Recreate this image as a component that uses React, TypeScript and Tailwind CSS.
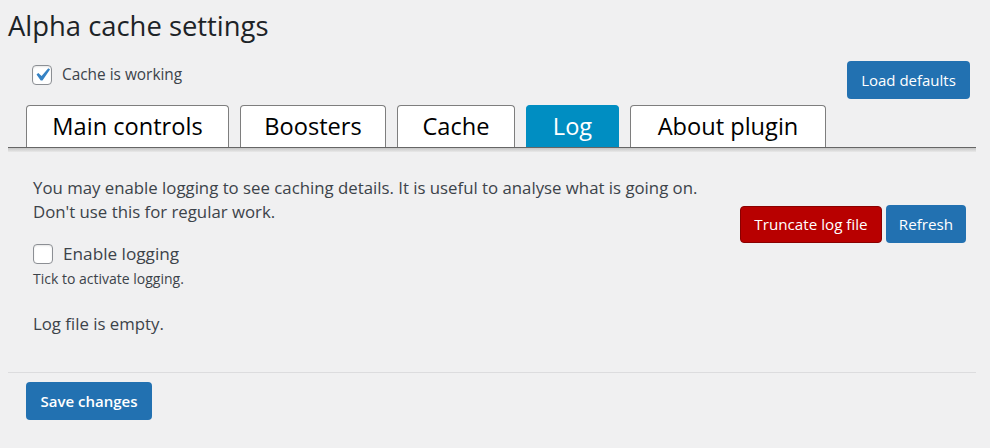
import React from 'react'

const TABS = [
  { label: 'Main controls', w: 'w-[203px]', active: false },
  { label: 'Boosters', w: 'w-[146px]', active: false },
  { label: 'Cache', w: 'w-[118px]', active: false },
  { label: 'Log', w: 'w-[93px]', active: true },
  { label: 'About plugin', w: 'w-[196px]', active: false },
]

function Checkbox({ checked }: { checked?: boolean }) {
  return (
    <span className="relative inline-block w-[20px] h-[20px] shrink-0 rounded-[4px] border border-[#8c8f94] bg-white shadow-[inset_0_1px_2px_rgba(0,0,0,0.1)]">
      {checked && (
        <svg viewBox="0 0 20 20" className="absolute left-[-4px] top-[-4px] w-[26px] h-[26px]">
          <path d="M14.83 4.89l1.34.94-5.81 8.38H9.02L5.78 9.67l1.34-1.25 2.57 2.4z" fill="#3582c4" />
        </svg>
      )}
    </span>
  )
}

export default function App() {
  return (
    <div className="min-h-screen bg-[#f0f0f1] font-['Open_Sans',sans-serif] text-[#3c434a]">
      <div className="ml-2 mr-[14px] pt-[8px]">
        <h1 className="text-[27.4px] leading-[36px] text-[#1d2327]">Alpha cache settings</h1>

        {/* status + defaults */}
        <div className="flex items-start justify-between mt-[17px]">
          <label className="flex items-center gap-[10px] ml-[24px] mt-[4px] text-[15.4px] leading-[20px]">
            <Checkbox checked />
            Cache is working
          </label>
          <button className="h-[38px] w-[123px] mr-[6px] rounded-[4px] bg-[#2271b1] text-white text-[15px]">
            Load defaults
          </button>
        </div>

        {/* tabs */}
        <div className="mt-[6px]">
          <div className="flex gap-[11px] pl-[18px] border-b border-[#666]">
            {TABS.map(t => (
              <div
                key={t.label}
                className={
                  'h-[42px] flex items-center justify-center rounded-t-[4px] border border-b-0 text-[23.6px] ' +
                  t.w +
                  (t.active ? ' bg-[#008ec2] border-[#008ec2] text-white' : ' bg-white border-[#7e7e7e] text-black')
                }
              >
                {t.label}
              </div>
            ))}
          </div>
          <div className="h-[4px] bg-gradient-to-b from-[#c6c6c6] to-[#e9e9e9]" />
        </div>

        {/* log panel */}
        <div className="flex justify-between pl-[25px] pr-[10px] pt-[24px]">
          <div>
            <p className="text-[16.8px] leading-[24px]">
              You may enable logging to see caching details. It is useful to analyse what is going on.
              <br />
              Don't use this for regular work.
            </p>
            <label className="flex items-center gap-[10px] mt-[18px] text-[17.2px] leading-[24px]">
              <Checkbox />
              Enable logging
            </label>
            <p className="mt-[3px] text-[14px] leading-[20px]">Tick to activate logging.</p>
            <p className="mt-[22px] text-[16.8px] leading-[26px]">Log file is empty.</p>
          </div>
          <div className="flex gap-[4px] mt-[30px] h-[38px]">
            <button className="h-[37px] w-[142px] rounded-[4px] border border-[#8a0000] bg-[#b80000] text-white text-[15.2px]">
              Truncate log file
            </button>
            <button className="h-[38px] w-[80px] -mt-[1px] rounded-[4px] bg-[#2271b1] text-white text-[15.2px]">
              Refresh
            </button>
          </div>
        </div>

        {/* footer */}
        <div className="mt-[35px] border-t border-[#dcdcde]">
          <button className="mt-[9px] ml-[18px] h-[38px] w-[126px] rounded-[4px] bg-[#2271b1] text-white text-[15px] font-semibold">
            Save changes
          </button>
        </div>
      </div>
    </div>
  )
}
